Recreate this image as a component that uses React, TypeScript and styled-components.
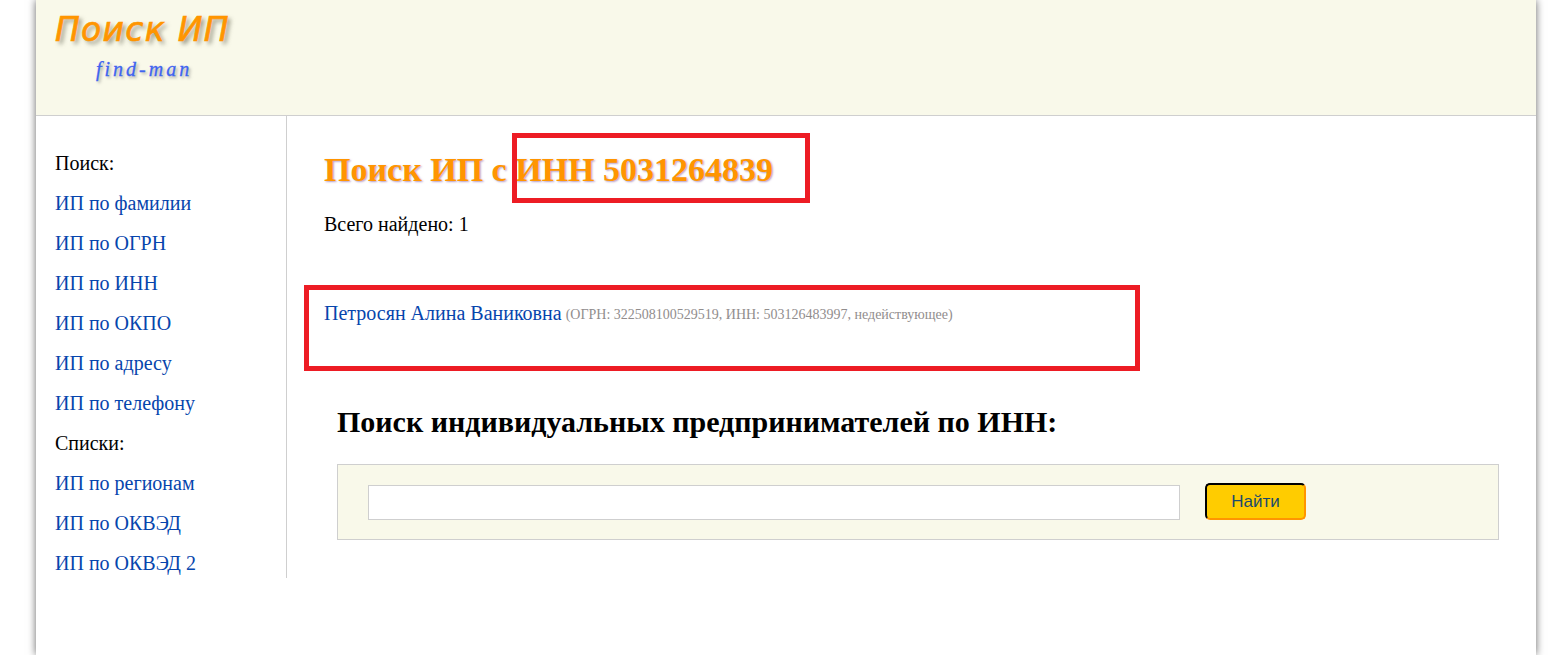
import React from "react";
import styled, {createGlobalStyle} from "styled-components";

const GlobalStyle = createGlobalStyle`
  html, body {
    margin: 0;
    padding: 0;
    background: #fff;
    overflow: hidden;
  }
  body {
    font-family: "Liberation Serif", "Times New Roman", serif;
    font-size: 20px;
    color: #000;
  }
`;

const Wrapper = styled.div`
  width: 1500px;
  height: 655px;
  margin-left: 36px;
  background: #fff;
  box-shadow: 0 0 8px rgba(0, 0, 0, 0.6);
  overflow: hidden;
`;

const Header = styled.header`
  height: 115px;
  background: #f9f9ea;
  border-bottom: 1px solid #cfcfcf;
  padding-left: 19px;
`;

const LogoTitle = styled.div`
  padding-top: 10px;
  font-family: "DejaVu Sans", sans-serif;
  font-style: italic;
  font-size: 33px;
  line-height: 40px;
  letter-spacing: 1.3px;
  color: #ff9500;
  -webkit-text-stroke: 0.7px #ff9500;
  text-shadow: 3px 3px 4px rgba(90, 90, 70, 0.6);
`;

const LogoSub = styled.div`
  margin: 8px 0 0 41px;
  font-family: "Liberation Serif", serif;
  font-style: italic;
  font-size: 20px;
  line-height: 22px;
  letter-spacing: 3px;
  color: #3f64f0;
  -webkit-text-stroke: 0.3px #3f64f0;
  text-shadow: 2px 2px 3px rgba(90, 90, 90, 0.5);
`;

const Body = styled.div`
  display: flex;
  align-items: flex-start;
`;

const Sidebar = styled.nav`
  width: 250px;
  height: 435px;
  flex: none;
  border-right: 1px solid #cfcfcf;
  padding-top: 27px;
`;

const SideLabel = styled.div`
  height: 40px;
  line-height: 40px;
  padding-left: 19px;
`;

const SideLink = styled.a`
  display: block;
  height: 40px;
  line-height: 40px;
  padding-left: 19px;
  color: #0645ad;
  text-decoration: none;
`;

const Content = styled.main`
  flex: 1;
  padding-left: 37px;
`;

const Title = styled.h1`
  margin: 34px 0 0;
  font-size: 34px;
  line-height: 40px;
  font-weight: bold;
  color: #ff9500;
  text-shadow: 1px 1px 2px rgba(130, 90, 160, 0.6);
`;

const Found = styled.div`
  margin-top: 22px;
  line-height: 24px;
`;

const Result = styled.div`
  margin-top: 65px;
  line-height: 24px;
`;

const ResultLink = styled.a`
  color: #0645ad;
  text-decoration: none;
`;

const ResultMeta = styled.span`
  margin-left: -1px;
  font-size: 14px;
  vertical-align: 1px;
  color: #918d8d;
`;

const SearchBlock = styled.section`
  margin: 77px 0 0 13px;
  width: 1162px;
`;

const SearchTitle = styled.h2`
  margin: 0;
  font-size: 30px;
  line-height: 36px;
  font-weight: bold;
`;

const SearchForm = styled.form`
  display: flex;
  align-items: center;
  gap: 25px;
  margin-top: 24px;
  height: 74px;
  padding-left: 30px;
  background: #f9f9ea;
  border: 1px solid #cfcfcf;
`;

const SearchInput = styled.input`
  width: 812px;
  height: 35px;
  box-sizing: border-box;
  background: #fff;
  border: 1px solid #cfcfcf;
  padding: 0 8px;
`;

const SearchButton = styled.button`
  width: 101px;
  height: 37px;
  margin-top: -1px;
  box-sizing: border-box;
  border-radius: 5px;
  border: 2px solid;
  border-color: #000 #ff9500 #ff9500 #000;
  background: #ffcc00;
  color: #1a4a6e;
  font-family: "Liberation Sans", Arial, sans-serif;
  font-size: 17px;
  padding: 0;
`;

// red annotation frames drawn over the page
const Frame = styled.div<{$left: number; $top: number; $width: number; $height: number}>`
  position: absolute;
  left: ${p => p.$left}px;
  top: ${p => p.$top}px;
  width: ${p => p.$width}px;
  height: ${p => p.$height}px;
  box-sizing: border-box;
  border: 5px solid #ed1c24;
  pointer-events: none;
`;

const links1 = ["ИП по фамилии", "ИП по ОГРН", "ИП по ИНН", "ИП по ОКПО", "ИП по адресу", "ИП по телефону"];
const links2 = ["ИП по регионам", "ИП по ОКВЭД", "ИП по ОКВЭД 2"];

export default function App() {
  return (
    <>
      <GlobalStyle/>
      <Wrapper>
        <Header>
          <LogoTitle>Поиск ИП</LogoTitle>
          <LogoSub>find-man</LogoSub>
        </Header>
        <Body>
          <Sidebar>
            <SideLabel>Поиск:</SideLabel>
            {links1.map(l => <SideLink href="#" key={l}>{l}</SideLink>)}
            <SideLabel>Списки:</SideLabel>
            {links2.map(l => <SideLink href="#" key={l}>{l}</SideLink>)}
          </Sidebar>
          <Content>
            <Title>Поиск ИП с ИНН 5031264839</Title>
            <Found>Всего найдено: 1</Found>
            <Result>
              <ResultLink href="#">Петросян Алина Ваниковна</ResultLink>{" "}
              <ResultMeta>(ОГРН: 322508100529519, ИНН: 503126483997, недействующее)</ResultMeta>
            </Result>
            <SearchBlock>
              <SearchTitle>Поиск индивидуальных предпринимателей по ИНН:</SearchTitle>
              <SearchForm>
                <SearchInput type="text"/>
                <SearchButton type="button">Найти</SearchButton>
              </SearchForm>
            </SearchBlock>
          </Content>
        </Body>
      </Wrapper>
      <Frame $left={512} $top={133} $width={298} $height={70}/>
      <Frame $left={304} $top={285} $width={836} $height={86}/>
    </>
  );
}
